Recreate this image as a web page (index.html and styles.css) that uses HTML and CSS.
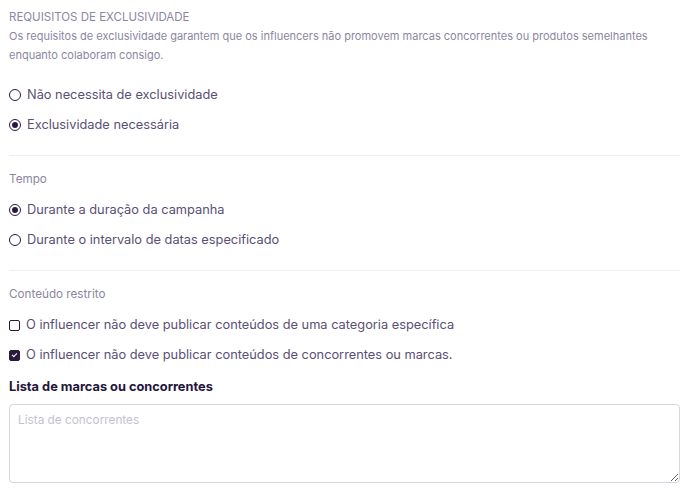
FILE: index.html
```html
<!DOCTYPE html>
<html lang="pt">
<head>
    <meta charset="UTF-8">
    <meta name="viewport" content="width=device-width, initial-scale=1.0">
    <title>Requisitos de exclusividade</title>
    <link rel="stylesheet" href="styles.css">
</head>
<body>
    <div class="container">
        <div class="section">
            <div class="section-title">REQUISITOS DE EXCLUSIVIDADE</div>
            <p class="section-desc">Os requisitos de exclusividade garantem que os influencers não promovem marcas concorrentes ou produtos semelhantes enquanto colaboram consigo.</p>
            <div class="options first">
                <label class="option">
                    <input type="radio" name="exclusivity">
                    <span>Não necessita de exclusividade</span>
                </label>
                <label class="option">
                    <input type="radio" name="exclusivity" checked>
                    <span>Exclusividade necessária</span>
                </label>
            </div>
        </div>

        <div class="section">
            <div class="section-label">Tempo</div>
            <div class="options">
                <label class="option">
                    <input type="radio" name="time" checked>
                    <span>Durante a duração da campanha</span>
                </label>
                <label class="option">
                    <input type="radio" name="time">
                    <span>Durante o intervalo de datas especificado</span>
                </label>
            </div>
        </div>

        <div class="section last">
            <div class="section-label">Conteúdo restrito</div>
            <div class="options">
                <label class="option">
                    <input type="checkbox">
                    <span>O influencer não deve publicar conteúdos de uma categoria específica</span>
                </label>
                <label class="option">
                    <input type="checkbox" checked>
                    <span>O influencer não deve publicar conteúdos de concorrentes ou marcas.</span>
                </label>
            </div>
            <label class="field-label" for="competitors">Lista de marcas ou concorrentes</label>
            <textarea id="competitors" placeholder="Lista de concorrentes"></textarea>
        </div>
    </div>
</body>
</html>
```

FILE: styles.css
```css
body {
    margin: 0;
    background: #ffffff;
    font-family: Inter, "Noto Sans", sans-serif;
    color: #5b4f73;
}
.container {
    padding: 8px 8px 0 9px;
}
.section {
    padding-bottom: 20px;
    border-bottom: 1px solid #efeef4;
    margin-bottom: 14px;
}
.section.last {
    border-bottom: none;
    padding-bottom: 0;
}
.section-title {
    font-size: 11.5px;
    line-height: 19px;
    color: #8c86a2;
}
.section-desc {
    margin: 0;
    font-size: 11px;
    line-height: 19px;
    color: #8c86a2;
}
.section-label {
    font-size: 11.7px;
    line-height: 19px;
    color: #8c86a2;
}
.options {
    display: flex;
    flex-direction: column;
    gap: 10px;
    margin-top: 11px;
}
.options.first {
    margin-top: 20px;
}
.option {
    display: flex;
    align-items: center;
    gap: 6px;
    font-size: 12.8px;
    line-height: 20px;
    cursor: pointer;
}
.option input {
    appearance: none;
    -webkit-appearance: none;
    margin: 0;
    width: 12px;
    height: 12px;
    border: 1.3px solid #2a1a40;
    flex-shrink: 0;
    box-sizing: border-box;
    display: grid;
    place-content: center;
}
.option input[type="radio"] {
    border-radius: 50%;
}
.option input[type="radio"]:checked::before {
    content: "";
    width: 6px;
    height: 6px;
    border-radius: 50%;
    background: #2a1a40;
}
.option input[type="checkbox"] {
    width: 11px;
    height: 11px;
    border-radius: 2px;
}
.option input[type="checkbox"]:checked {
    background: #2a1a40;
}
.option input[type="checkbox"]:checked::before {
    content: "";
    width: 4px;
    height: 2px;
    border-left: 1.2px solid #fff;
    border-bottom: 1.2px solid #fff;
    transform: translateY(-1px) rotate(-45deg);
}
.field-label {
    display: block;
    margin-top: 12px;
    font-size: 12.8px;
    line-height: 20px;
    font-weight: 700;
    color: #24153a;
}
textarea {
    display: block;
    margin-top: 7px;
    width: 100%;
    height: 79px;
    box-sizing: border-box;
    border: 1px solid #d7d4e1;
    border-radius: 4px;
    padding: 8px;
    font-family: Inter, "Noto Sans", sans-serif;
    font-size: 11.8px;
    color: #5b4f73;
}
textarea::placeholder {
    color: #c5c1d2;
}
```
